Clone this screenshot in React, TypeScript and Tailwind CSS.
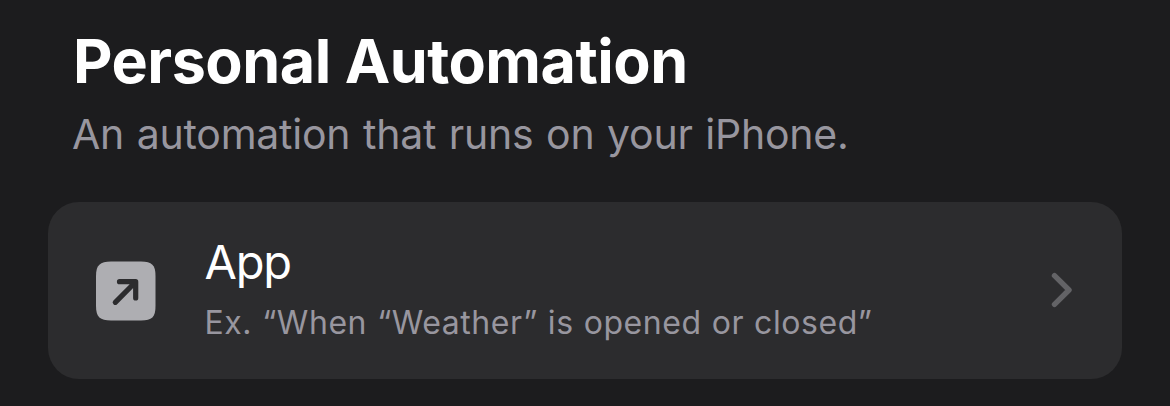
export default function App() {
  return (
    <main className="flex h-[406px] w-full flex-col overflow-hidden bg-[#1c1c1e] px-12 pt-[30px] font-['Inter',sans-serif]">
      <header className="pl-[25px] whitespace-nowrap">
        <h1 className="h-[62px] text-[61px] leading-[62px] font-bold tracking-[-0.5px] text-white">Personal Automation</h1>
        <p className="-ml-px mt-[16px] h-[52px] text-[41px] leading-[52px] tracking-[-0.24px] [word-spacing:1.4px] text-[#98969f]">An automation that runs on your iPhone.</p>
      </header>
      <button className="mt-[42px] flex h-[177px] w-[1074px] items-center rounded-[31px] bg-[#2c2c2e] pr-[49px] pl-[48px] text-left">
        <svg className="h-[60px] w-[60px] shrink-0" viewBox="0 0 60 60" fill="none">
          <path d="M15 .5h30C56 .5 59.500 4 59.500 15v30C59.500 56 56 59.500 45 59.500H15C4 59.500 0 56 0 45V15C0 4 4 .5 15 .5Z" fill="#aeaeb2" />
          <path d="M19.300 41.300 39.500 21M23.500 20.700h16.200v16.300" stroke="#2c2c2e" strokeWidth="5.200" strokeLinecap="round" strokeLinejoin="round" />
        </svg>
        <span className="-mt-[3px] ml-[48.500px] flex flex-1 flex-col whitespace-nowrap">
          <span className="text-[47px] leading-[56px] tracking-[-1.2px] text-white">App</span>
          <span className="mt-[11px] text-[32px] leading-[44px] tracking-[0.56px] [word-spacing:0.5px] text-[#98969f]">Ex. “When “Weather” is opened or closed”</span>
        </span>
        <svg className="-mt-[2px] h-[36px] w-[22px]" viewBox="0 0 22 36" fill="none">
          <path d="m3.500 3.700 14.500 14.300L3.500 32.300" stroke="#636366" strokeWidth="5.400" strokeLinecap="round" strokeLinejoin="round" />
        </svg>
      </button>
    </main>
  );
}
